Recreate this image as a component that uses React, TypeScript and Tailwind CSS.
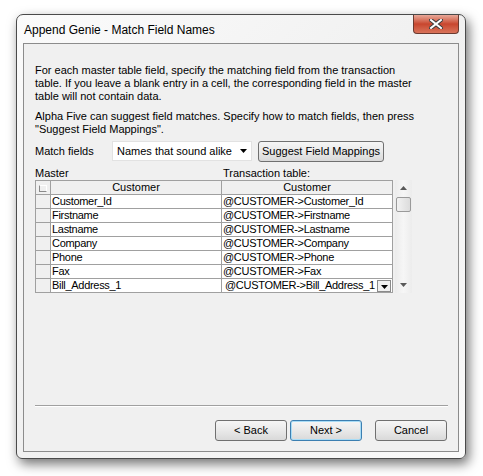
import React from 'react';

const rows = [
  ['Customer_Id', '@CUSTOMER->Customer_Id'],
  ['Firstname', '@CUSTOMER->Firstname'],
  ['Lastname', '@CUSTOMER->Lastname'],
  ['Company', '@CUSTOMER->Company'],
  ['Phone', '@CUSTOMER->Phone'],
  ['Fax', '@CUSTOMER->Fax'],
  ['Bill_Address_1', '@CUSTOMER->Bill_Address_1'],
];

const btn =
  'h-[21px] w-[72px] rounded-[3px] border bg-gradient-to-b from-[#f6f6f6] via-[#e9e9e9] to-[#d9d9d9] text-[11px] text-black leading-none flex items-center justify-center';

const App = () => {
  return (
    <div
      className="w-[483px] h-[476px] bg-white pt-[14px] pl-[16px]"
      style={{ fontFamily: '"Liberation Sans", Arial, sans-serif' }}
    >
      <div className="w-[450px] h-[445px] rounded-t-[7px] rounded-b-[6px] border border-[#4a4a4a] bg-gradient-to-br from-[#fbfbfb] via-[#f0f0f0] to-[#fafafa] shadow-[3px_5px_12px_rgba(0,0,0,0.55)] flex flex-col">
        {/* title bar */}
        <div className="h-[28px] flex items-start pl-[7px] pr-[6px]">
          <div className="pt-[8px] text-[12px] text-black leading-[14px]">Append Genie - Match Field Names</div>
          <div className="ml-auto w-[46px] h-[19px] rounded-b-[4px] border border-t-0 border-[#6b3a30] bg-gradient-to-b from-[#e7a899] via-[#c8462e] to-[#d9735a] flex items-center justify-center">
            <svg width="14" height="10" viewBox="0 0 14 10">
              <path d="M2 1 L12 9 M12 1 L2 9" stroke="#3c3c3c" strokeWidth="4" strokeLinecap="square" />
              <path d="M2 1 L12 9 M12 1 L2 9" stroke="#ffffff" strokeWidth="2" strokeLinecap="square" />
            </svg>
          </div>
        </div>

        {/* client area */}
        <div className="mx-[6px] h-[409px] border border-[#8c8c8c] bg-[#f0f0f0] pl-[11px] pr-[10px] pt-[20px] text-[11px] text-black">
          <p className="leading-[13px] whitespace-nowrap">
            For each master table field, specify the matching field from the transaction
            <br />
            table. If you leave a blank entry in a cell, the corresponding field in the master
            <br />
            table will not contain data.
          </p>
          <p className="mt-[7px] leading-[13px] whitespace-nowrap">
            Alpha Five can suggest field matches. Specify how to match fields, then press
            <br />
            "Suggest Field Mappings".
          </p>

          <div className="mt-[4px] h-[22px] flex items-center">
            <span className="w-[77px]">Match fields</span>
            <div className="w-[140px] h-[20px] bg-white border border-[#e2e2e2] flex items-center pl-[4px] pr-[4px]">
              <span className="flex-1">Names that sound alike</span>
              <svg width="7" height="4" viewBox="0 0 7 4">
                <path d="M0 0 L7 0 L3.5 4 Z" fill="#000" />
              </svg>
            </div>
            <button className="ml-[6px] h-[21px] px-[3px] rounded-[3px] border border-[#707070] bg-gradient-to-b from-[#f6f6f6] via-[#e9e9e9] to-[#d9d9d9] text-[11px] leading-none">
              Suggest Field Mappings
            </button>
          </div>

          <div className="mt-[5px] flex leading-[13px]">
            <span className="w-[188px]">Master</span>
            <span>Transaction table:</span>
          </div>

          <div className="flex">
            <table className="border-collapse table-fixed text-[11px] leading-[13px] tracking-[-0.3px]">
              <tbody>
                <tr className="h-[14px]">
                  <td className="w-[15px] border border-[#a0a0a0] bg-[#f0f0f0] p-0">
                    <div className="mx-auto w-[8px] h-[7px] border border-[#8a8a8a] border-t-[#ffffff] border-r-[#ffffff] mt-[2px]" />
                  </td>
                  <td className="w-[171px] border border-[#a0a0a0] bg-[#f0f0f0] p-0 text-center tracking-normal">Customer</td>
                  <td className="w-[171px] border border-[#a0a0a0] bg-[#f0f0f0] p-0 text-center tracking-normal">Customer</td>
                </tr>
                {rows.map(([m, t], i) => (
                  <tr key={m} className="h-[14px]">
                    <td className="border border-[#a0a0a0] bg-[#f0f0f0] p-0" />
                    <td className="border border-[#a0a0a0] bg-white p-0 pl-[1px] whitespace-nowrap overflow-hidden">{m}</td>
                    <td className="border border-[#a0a0a0] bg-white p-0 pl-[1px] whitespace-nowrap overflow-hidden">
                      {i === rows.length - 1 ? (
                        <div className="flex items-center pl-[2px] pr-[1px]">
                          <span className="flex-1 overflow-hidden">{t}</span>
                          <div className="shrink-0 ml-[1px] w-[14px] h-[12px] border border-[#8a8a8a] bg-[#f0f0f0] flex items-end justify-center pb-[2px]">
                            <svg width="7" height="4" viewBox="0 0 7 4">
                              <path d="M0 0 L7 0 L3.5 4 Z" fill="#000" />
                            </svg>
                          </div>
                        </div>
                      ) : (
                        t
                      )}
                    </td>
                  </tr>
                ))}
              </tbody>
            </table>

            {/* scrollbar */}
            <div className="ml-[2px] w-[17px] h-[113px] bg-gradient-to-r from-[#ececec] via-[#f6f6f6] to-[#ececec] flex flex-col items-center">
              <svg className="mt-[6px]" width="7" height="4" viewBox="0 0 7 4">
                <path d="M0 4 L7 4 L3.5 0 Z" fill="#5a5a5a" />
              </svg>
              <div className="mt-[7px] w-[15px] h-[15px] rounded-[2px] border border-[#9a9a9a] bg-gradient-to-r from-[#f2f2f2] to-[#dcdcdc]" />
              <div className="flex-1" />
              <svg className="mb-[6px]" width="7" height="4" viewBox="0 0 7 4">
                <path d="M0 0 L7 0 L3.5 4 Z" fill="#5a5a5a" />
              </svg>
            </div>
          </div>

          <div className="mt-[112px] h-[2px] border-t border-[#a0a0a0] border-b border-b-white" />

          <div className="mt-[13px] flex justify-end pr-[1px]">
            <button className={btn + ' border-[#707070]'}>&lt; Back</button>
            <button className={btn + ' ml-[3px] border-[#3c7fb1] shadow-[inset_0_0_0_1px_#a8dcf6]'}>Next &gt;</button>
            <button className={btn + ' ml-[13px] border-[#707070]'}>Cancel</button>
          </div>
        </div>
      </div>
    </div>
  );
};

export default App;
